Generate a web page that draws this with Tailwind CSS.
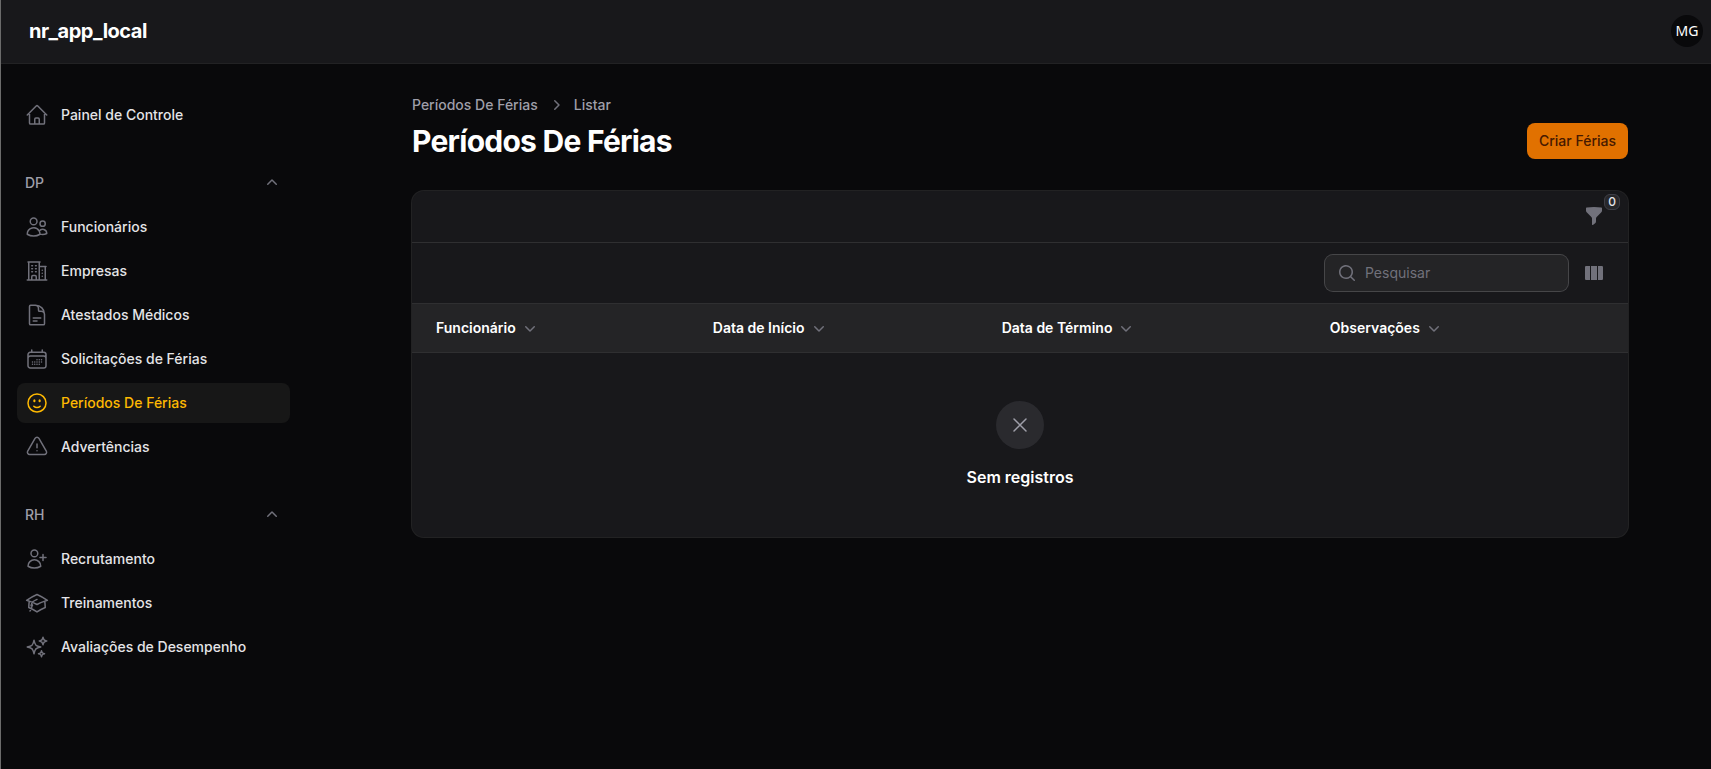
<!DOCTYPE html>
<html lang="pt-BR">
  <head>
    <meta charset="UTF-8" />
    <meta name="viewport" content="width=device-width, initial-scale=1.0" />
    <title>Períodos De Férias - nr_app_local</title>
    <script src="https://cdn.jsdelivr.net/npm/@tailwindcss/browser@4"></script>
  </head>
  <body class="min-h-screen border-l border-[#6b6b6b] bg-zinc-950 font-['Inter',sans-serif] text-sm text-zinc-200">
    <!-- Topbar -->
    <header class="flex h-[63px] items-center justify-between bg-zinc-900 pb-px pl-7 pr-2 shadow-[0_1px_0_#222224]">
      <a href="#" class="text-xl font-bold tracking-tight text-white">nr_app_local</a>
      <button type="button" aria-label="Menu do usuário" class="size-8 rounded-full bg-zinc-950 font-['Noto_Sans',sans-serif] text-sm text-white">MG</button>
    </header>

    <div class="flex gap-6">
      <!-- Sidebar -->
      <aside class="w-[304px] shrink-0 py-8 pl-4 pr-[15px]">
        <nav class="flex flex-col gap-7 font-medium">
          <a href="#" class="flex items-center gap-3 rounded-lg p-2">
            <svg class="size-6 text-zinc-500" fill="none" viewBox="0 0 24 24" stroke-width="1.5" stroke="currentColor" stroke-linecap="round" stroke-linejoin="round">
              <path d="m2.25 12 8.954-8.955c.44-.439 1.152-.439 1.591 0L21.75 12M4.5 9.75v10.125c0 .621.504 1.125 1.125 1.125H9.75v-4.875c0-.621.504-1.125 1.125-1.125h2.25c.621 0 1.125.504 1.125 1.125V21h4.125c.621 0 1.125-.504 1.125-1.125V9.75M8.25 21h8.25" />
            </svg>
            Painel de Controle
          </a>

          <!-- DP -->
          <div class="flex flex-col gap-1">
            <button type="button" class="flex h-10 items-center justify-between px-2 font-medium text-zinc-400">
              DP
              <svg class="size-5 text-zinc-500" viewBox="0 0 20 20" fill="currentColor">
                <path fill-rule="evenodd" clip-rule="evenodd" d="M9.47 6.47a.75.75 0 0 1 1.06 0l4.25 4.25a.75.75 0 1 1-1.06 1.06L10 8.06l-3.72 3.72a.75.75 0 0 1-1.06-1.06l4.25-4.25Z" />
              </svg>
            </button>
            <ul class="flex flex-col gap-1">
              <li>
                <a href="#" class="flex items-center gap-3 rounded-lg p-2">
                  <svg class="size-6 text-zinc-500" fill="none" viewBox="0 0 24 24" stroke-width="1.5" stroke="currentColor" stroke-linecap="round" stroke-linejoin="round">
                    <path d="M15 19.128a9.38 9.38 0 0 0 2.625.372 9.337 9.337 0 0 0 4.121-.952 4.125 4.125 0 0 0-7.533-2.493M15 19.128v-.003c0-1.113-.285-2.16-.786-3.07M15 19.128v.106A12.318 12.318 0 0 1 8.624 21c-2.331 0-4.512-.645-6.374-1.766l-.001-.109a6.375 6.375 0 0 1 11.964-3.07M12 6.375a3.375 3.375 0 1 1-6.75 0 3.375 3.375 0 0 1 6.75 0Zm8.25 2.25a2.625 2.625 0 1 1-5.25 0 2.625 2.625 0 0 1 5.25 0Z" />
                  </svg>
                  Funcionários
                </a>
              </li>
              <li>
                <a href="#" class="flex items-center gap-3 rounded-lg p-2">
                  <svg class="size-6 text-zinc-500" fill="none" viewBox="0 0 24 24" stroke-width="1.5" stroke="currentColor" stroke-linecap="round" stroke-linejoin="round">
                    <path d="M2.25 21h19.5m-18-18v18m10.5-18v18m6-13.5V21M6.75 6.75h.75m-.75 3h.75m-.75 3h.75m3-6h.75m-.75 3h.75m-.75 3h.75M6.75 21v-3.375c0-.621.504-1.125 1.125-1.125h2.25c.621 0 1.125.504 1.125 1.125V21M3 3h12m-.75 4.5H21m-3.75 3.75h.008v.008h-.008v-.008Zm0 3h.008v.008h-.008v-.008Zm0 3h.008v.008h-.008v-.008Z" />
                  </svg>
                  Empresas
                </a>
              </li>
              <li>
                <a href="#" class="flex items-center gap-3 rounded-lg p-2">
                  <svg class="size-6 text-zinc-500" fill="none" viewBox="0 0 24 24" stroke-width="1.5" stroke="currentColor" stroke-linecap="round" stroke-linejoin="round">
                    <path d="M19.5 14.25v-2.625a3.375 3.375 0 0 0-3.375-3.375h-1.5A1.125 1.125 0 0 1 13.5 7.125v-1.5a3.375 3.375 0 0 0-3.375-3.375H8.25m0 12.75h7.5m-7.5 3H12M10.5 2.25H5.625c-.621 0-1.125.504-1.125 1.125v17.25c0 .621.504 1.125 1.125 1.125h12.75c.621 0 1.125-.504 1.125-1.125V11.25a9 9 0 0 0-9-9Z" />
                  </svg>
                  Atestados Médicos
                </a>
              </li>
              <li>
                <a href="#" class="flex items-center gap-3 rounded-lg p-2">
                  <svg class="size-6 text-zinc-500" fill="none" viewBox="0 0 24 24" stroke-width="1.5" stroke="currentColor" stroke-linecap="round" stroke-linejoin="round">
                    <path d="M6.75 3v2.25M17.25 3v2.25M3 18.75V7.5a2.25 2.25 0 0 1 2.25-2.25h13.5A2.25 2.25 0 0 1 21 7.5v11.25m-18 0A2.25 2.25 0 0 0 5.25 21h13.5A2.25 2.25 0 0 0 21 18.75m-18 0v-7.5A2.25 2.25 0 0 1 5.25 9h13.5A2.25 2.25 0 0 1 21 11.25v7.5m-9-6h.008v.008H12v-.008ZM12 15h.008v.008H12V15Zm0 2.25h.008v.008H12v-.008ZM9.75 15h.008v.008H9.75V15Zm0 2.25h.008v.008H9.75v-.008ZM7.5 15h.008v.008H7.5V15Zm0 2.25h.008v.008H7.5v-.008Zm6.75-4.5h.008v.008h-.008v-.008Zm0 2.25h.008v.008h-.008V15Zm0 2.25h.008v.008h-.008v-.008Zm2.25-4.5h.008v.008H16.5v-.008Zm0 2.25h.008v.008H16.5V15Z" />
                  </svg>
                  Solicitações de Férias
                </a>
              </li>
              <li>
                <a href="#" aria-current="page" class="flex items-center gap-3 rounded-lg bg-[#171717] p-2 text-amber-400">
                  <svg class="size-6" fill="none" viewBox="0 0 24 24" stroke-width="1.5" stroke="currentColor" stroke-linecap="round" stroke-linejoin="round">
                    <path d="M15.182 15.182a4.5 4.5 0 0 1-6.364 0M21 12a9 9 0 1 1-18 0 9 9 0 0 1 18 0ZM9.75 9.75c0 .414-.168.75-.375.75S9 10.164 9 9.75 9.168 9 9.375 9s.375.336.375.75Zm-.375 0h.008v.015h-.008V9.75Zm5.625 0c0 .414-.168.75-.375.75s-.375-.336-.375-.75.168-.75.375-.75.375.336.375.75Zm-.375 0h.008v.015h-.008V9.75Z" />
                  </svg>
                  Períodos De Férias
                </a>
              </li>
              <li>
                <a href="#" class="flex items-center gap-3 rounded-lg p-2">
                  <svg class="size-6 text-zinc-500" fill="none" viewBox="0 0 24 24" stroke-width="1.5" stroke="currentColor" stroke-linecap="round" stroke-linejoin="round">
                    <path d="M12 9v3.75m-9.303 3.376c-.866 1.5.217 3.374 1.948 3.374h14.71c1.73 0 2.813-1.874 1.948-3.374L13.949 3.378c-.866-1.5-3.032-1.5-3.898 0L2.697 16.126ZM12 15.75h.007v.008H12v-.008Z" />
                  </svg>
                  Advertências
                </a>
              </li>
            </ul>
          </div>

          <!-- RH -->
          <div class="flex flex-col gap-1">
            <button type="button" class="flex h-10 items-center justify-between px-2 font-medium text-zinc-400">
              RH
              <svg class="size-5 text-zinc-500" viewBox="0 0 20 20" fill="currentColor">
                <path fill-rule="evenodd" clip-rule="evenodd" d="M9.47 6.47a.75.75 0 0 1 1.06 0l4.25 4.25a.75.75 0 1 1-1.06 1.06L10 8.06l-3.72 3.72a.75.75 0 0 1-1.06-1.06l4.25-4.25Z" />
              </svg>
            </button>
            <ul class="flex flex-col gap-1">
              <li>
                <a href="#" class="flex items-center gap-3 rounded-lg p-2">
                  <svg class="size-6 text-zinc-500" fill="none" viewBox="0 0 24 24" stroke-width="1.5" stroke="currentColor" stroke-linecap="round" stroke-linejoin="round">
                    <path d="M18 7.5v3m0 0v3m0-3h3m-3 0h-3m-2.25-4.125a3.375 3.375 0 1 1-6.75 0 3.375 3.375 0 0 1 6.75 0ZM3 19.235v-.11a6.375 6.375 0 0 1 12.75 0v.109A12.318 12.318 0 0 1 9.374 21c-2.331 0-4.512-.645-6.374-1.766Z" />
                  </svg>
                  Recrutamento
                </a>
              </li>
              <li>
                <a href="#" class="flex items-center gap-3 rounded-lg p-2">
                  <svg class="size-6 text-zinc-500" fill="none" viewBox="0 0 24 24" stroke-width="1.5" stroke="currentColor" stroke-linecap="round" stroke-linejoin="round">
                    <path d="M4.26 10.147a60.438 60.438 0 0 0-.491 6.347A48.62 48.62 0 0 1 12 20.904a48.62 48.62 0 0 1 8.232-4.41 60.46 60.46 0 0 0-.491-6.347m-15.482 0a50.636 50.636 0 0 0-2.658-.813A59.906 59.906 0 0 1 12 3.493a59.903 59.903 0 0 1 10.399 5.84c-.896.248-1.783.52-2.658.814m-15.482 0A50.717 50.717 0 0 1 12 13.489a50.702 50.702 0 0 1 7.74-3.342M6.75 15a.75.75 0 1 0 0-1.5.75.75 0 0 0 0 1.5Zm0 0v-3.675A55.378 55.378 0 0 1 12 8.443m-7.007 11.55A5.981 5.981 0 0 0 6.75 15.75v-1.5" />
                  </svg>
                  Treinamentos
                </a>
              </li>
              <li>
                <a href="#" class="flex items-center gap-3 rounded-lg p-2">
                  <svg class="size-6 text-zinc-500" fill="none" viewBox="0 0 24 24" stroke-width="1.5" stroke="currentColor" stroke-linecap="round" stroke-linejoin="round">
                    <path d="M9.813 15.904 9 18.75l-.813-2.846a4.5 4.5 0 0 0-3.09-3.09L2.25 12l2.846-.813a4.5 4.5 0 0 0 3.09-3.09L9 5.25l.813 2.846a4.5 4.5 0 0 0 3.09 3.09L15.75 12l-2.846.813a4.5 4.5 0 0 0-3.09 3.09ZM18.259 8.715 18 9.75l-.259-1.035a3.375 3.375 0 0 0-2.455-2.456L14.25 6l1.036-.259a3.375 3.375 0 0 0 2.455-2.456L18 2.25l.259 1.035a3.375 3.375 0 0 0 2.456 2.456L21.75 6l-1.035.259a3.375 3.375 0 0 0-2.456 2.456ZM16.894 20.567 16.5 21.75l-.394-1.183a2.25 2.25 0 0 0-1.423-1.423L13.5 18.75l1.183-.394a2.25 2.25 0 0 0 1.423-1.423l.394-1.183.394 1.183a2.25 2.25 0 0 0 1.423 1.423l1.183.394-1.183.394a2.25 2.25 0 0 0-1.423 1.423Z" />
                  </svg>
                  Avaliações de Desempenho
                </a>
              </li>
            </ul>
          </div>
        </nav>
      </aside>

      <!-- Content -->
      <main class="mx-auto w-full max-w-7xl p-8">
        <div class="mb-8 flex items-end justify-between">
          <div>
            <nav class="mb-2 flex items-center gap-2 font-medium text-zinc-400" aria-label="Breadcrumb">
              <a href="#">Períodos De Férias</a>
              <svg class="size-5 text-zinc-500" viewBox="0 0 20 20" fill="currentColor">
                <path fill-rule="evenodd" clip-rule="evenodd" d="M8.22 5.22a.75.75 0 0 1 1.06 0l4.25 4.25a.75.75 0 0 1 0 1.06l-4.25 4.25a.75.75 0 0 1-1.06-1.06L11.94 10 8.22 6.28a.75.75 0 0 1 0-1.06Z" />
              </svg>
              <a href="#">Listar</a>
            </nav>
            <h1 class="text-3xl font-bold tracking-tight text-white">Períodos De Férias</h1>
          </div>
          <a href="#" class="rounded-lg bg-amber-600 px-3 py-2 font-medium text-amber-950">Criar Férias</a>
        </div>

        <section class="rounded-xl bg-zinc-900 ring-1 ring-white/10">
          <!-- Filters -->
          <div class="flex h-[52px] items-center justify-end border-b border-[#2f2f31] px-6 pb-px">
            <button type="button" aria-label="Filtrar" class="relative text-zinc-500">
              <svg class="size-5" viewBox="0 0 20 20" fill="currentColor">
                <path fill-rule="evenodd" clip-rule="evenodd" d="M2.628 1.601C5.028 1.206 7.49 1 10 1s4.973.206 7.372.601a.75.75 0 0 1 .628.74v2.288a2.25 2.25 0 0 1-.659 1.59l-4.682 4.683a2.25 2.25 0 0 0-.659 1.59v3.037c0 .684-.31 1.33-.844 1.757l-1.937 1.55A.75.75 0 0 1 8 18.25v-5.757a2.25 2.25 0 0 0-.659-1.591L2.659 6.22A2.25 2.25 0 0 1 2 4.629V2.34a.75.75 0 0 1 .628-.74Z" />
              </svg>
              <span class="absolute -right-4 -top-3 flex size-4 items-center justify-center rounded-md border border-zinc-700 bg-zinc-800 text-xs font-medium text-zinc-200">0</span>
            </button>
          </div>

          <!-- Search and columns -->
          <div class="flex items-center justify-end gap-4 border-b border-[#2f2f31] px-6 py-3">
            <label class="flex h-9 w-[243px] items-center gap-2 rounded-lg bg-white/5 px-3 ring-1 ring-white/20">
              <svg class="size-5 shrink-0 text-zinc-500" viewBox="0 0 20 20" fill="currentColor">
                <path fill-rule="evenodd" clip-rule="evenodd" d="M9 3.5a5.5 5.5 0 1 0 0 11 5.5 5.5 0 0 0 0-11ZM2 9a7 7 0 1 1 12.452 4.391l3.328 3.329a.75.75 0 1 1-1.06 1.06l-3.329-3.328A7 7 0 0 1 2 9Z" />
              </svg>
              <input type="search" aria-label="Pesquisar" placeholder="Pesquisar" class="w-full min-w-0 bg-transparent text-white outline-none placeholder:text-zinc-500" />
            </label>
            <button type="button" aria-label="Colunas" class="text-zinc-500">
              <svg class="size-5" viewBox="0 0 20 20" fill="currentColor">
                <path d="M14 17h3.75c.69 0 1.25-.56 1.25-1.25V4.25C19 3.56 18.44 3 17.75 3H14v14ZM13 3H7v14h6V3ZM2.25 3H6v14H2.25C1.56 17 1 16.44 1 15.75V4.25C1 3.56 1.56 3 2.25 3Z" />
              </svg>
            </button>
          </div>

          <!-- Table -->
          <table class="w-full text-left">
            <thead class="border-b border-[#2f2f31] bg-white/5 text-white">
              <tr>
                <th class="py-[14px] pl-6 pr-3 font-semibold">
                  <button type="button" class="flex items-center gap-1 whitespace-nowrap">
                    Funcionário
                    <svg class="size-5 text-zinc-500" viewBox="0 0 20 20" fill="currentColor"><path fill-rule="evenodd" clip-rule="evenodd" d="M5.22 8.22a.75.75 0 0 1 1.06 0L10 11.94l3.72-3.72a.75.75 0 1 1 1.06 1.06l-4.25 4.25a.75.75 0 0 1-1.06 0L5.22 9.28a.75.75 0 0 1 0-1.06Z" /></svg>
                  </button>
                </th>
                <th class="px-3 py-[14px] font-semibold">
                  <button type="button" class="flex items-center gap-1 whitespace-nowrap">
                    Data de Início
                    <svg class="size-5 text-zinc-500" viewBox="0 0 20 20" fill="currentColor"><path fill-rule="evenodd" clip-rule="evenodd" d="M5.22 8.22a.75.75 0 0 1 1.06 0L10 11.94l3.72-3.72a.75.75 0 1 1 1.06 1.06l-4.25 4.25a.75.75 0 0 1-1.06 0L5.22 9.28a.75.75 0 0 1 0-1.06Z" /></svg>
                  </button>
                </th>
                <th class="px-3 py-[14px] font-semibold">
                  <button type="button" class="flex items-center gap-1 whitespace-nowrap">
                    Data de Término
                    <svg class="size-5 text-zinc-500" viewBox="0 0 20 20" fill="currentColor"><path fill-rule="evenodd" clip-rule="evenodd" d="M5.22 8.22a.75.75 0 0 1 1.06 0L10 11.94l3.72-3.72a.75.75 0 1 1 1.06 1.06l-4.25 4.25a.75.75 0 0 1-1.06 0L5.22 9.28a.75.75 0 0 1 0-1.06Z" /></svg>
                  </button>
                </th>
                <th class="py-[14px] pl-3 pr-6 font-semibold">
                  <button type="button" class="flex items-center gap-1 whitespace-nowrap">
                    Observações
                    <svg class="size-5 text-zinc-500" viewBox="0 0 20 20" fill="currentColor"><path fill-rule="evenodd" clip-rule="evenodd" d="M5.22 8.22a.75.75 0 0 1 1.06 0L10 11.94l3.72-3.72a.75.75 0 1 1 1.06 1.06l-4.25 4.25a.75.75 0 0 1-1.06 0L5.22 9.28a.75.75 0 0 1 0-1.06Z" /></svg>
                  </button>
                </th>
              </tr>
            </thead>
            <tbody>
              <tr>
                <td colspan="4" class="py-12">
                  <div class="flex flex-col items-center gap-4">
                    <div class="rounded-full bg-zinc-500/20 p-3">
                      <svg class="size-6 text-zinc-400" fill="none" viewBox="0 0 24 24" stroke-width="1.5" stroke="currentColor" stroke-linecap="round" stroke-linejoin="round">
                        <path d="M6 18 18 6M6 6l12 12" />
                      </svg>
                    </div>
                    <h2 class="text-base font-semibold text-white">Sem registros</h2>
                  </div>
                </td>
              </tr>
            </tbody>
          </table>
        </section>
      </main>
    </div>
  </body>
</html>
